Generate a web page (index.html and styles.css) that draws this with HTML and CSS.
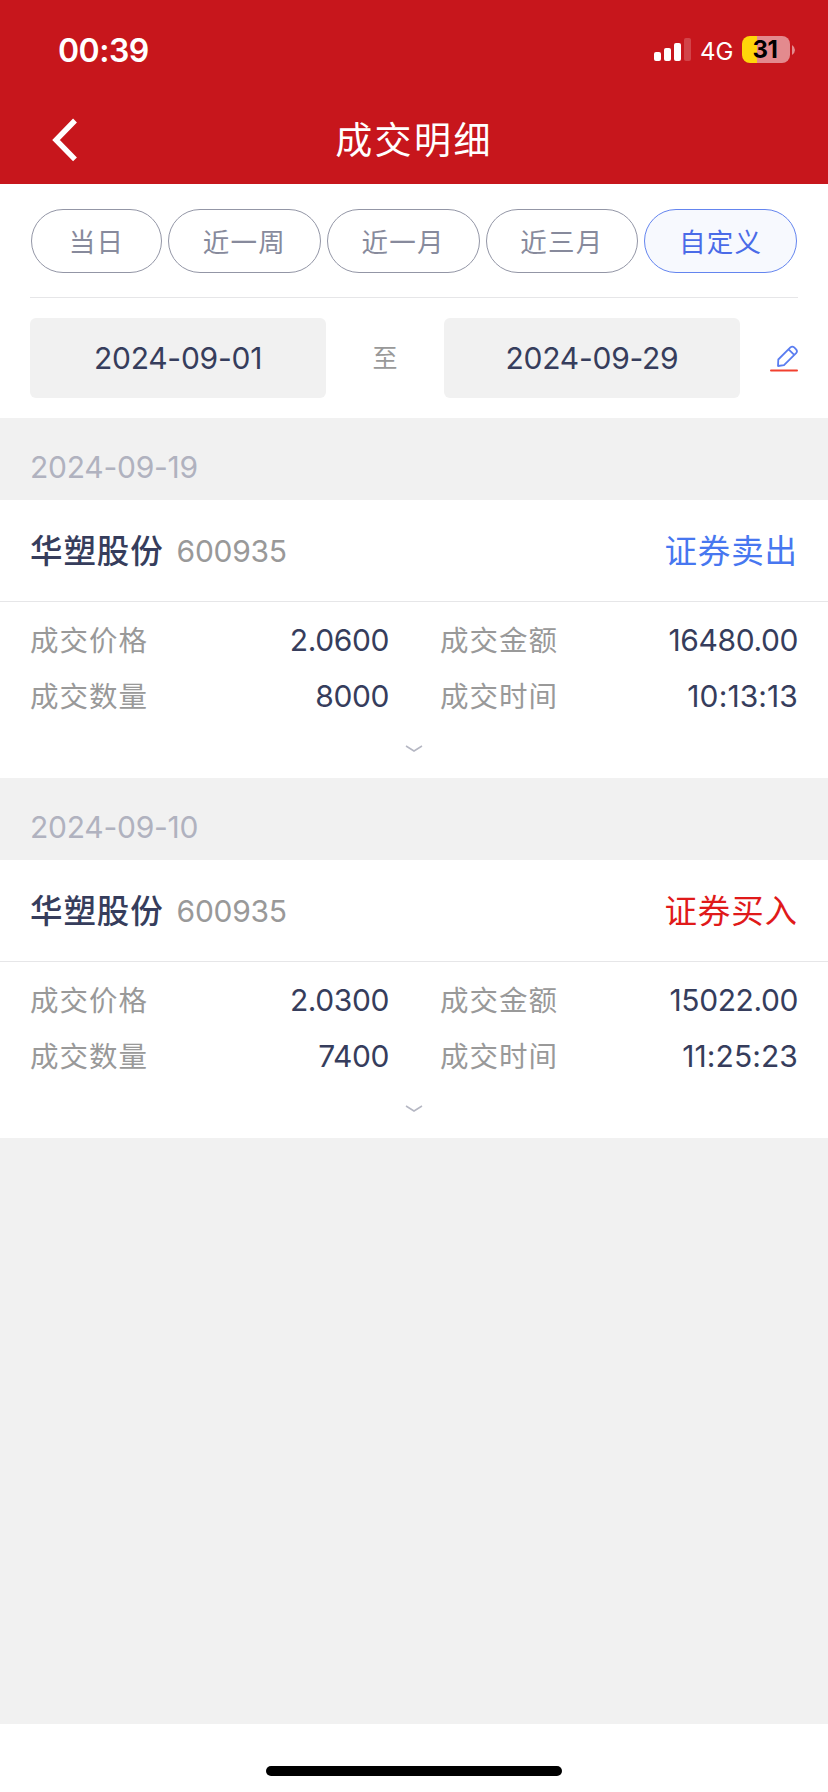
FILE: index.html
```html
<!DOCTYPE html>
<html lang="zh-CN">
<head>
  <meta charset="UTF-8">
  <meta name="viewport" content="width=device-width, initial-scale=1.0">
  <title>成交明细</title>
  <link rel="stylesheet" href="styles.css">
</head>
<body>
  <div class="app">
    <header>
      <div class="status">
        <span class="time">00:39</span>
        <svg class="signal" width="38" height="24" viewBox="0 0 38 24" fill="#fff">
          <rect x="0" y="14" width="7" height="9" rx="2"/>
          <rect x="10" y="10" width="7" height="13" rx="2"/>
          <rect x="20" y="5" width="7" height="18" rx="2"/>
          <rect x="30" y="0" width="7" height="23" rx="2" opacity=".2"/>
        </svg>
        <span class="net">4G</span>
        <span class="battery">31</span>
        <svg class="tip" width="3" height="10" viewBox="0 0 3 10"><path d="M0 0Q3 2 3 5Q3 8 0 10Z" fill="#fff" opacity=".5"/></svg>
      </div>
      <nav>
        <svg class="back" width="28" height="44" viewBox="0 0 28 44" fill="none" stroke="#fff" stroke-width="5.4"><path d="M25 2.5L6 22L25 41.3"/></svg>
        <h1>成交明细</h1>
      </nav>
    </header>

    <section class="filters">
      <div class="tabs">
        <button class="tab day">当日</button>
        <button class="tab">近一周</button>
        <button class="tab">近一月</button>
        <button class="tab">近三月</button>
        <button class="tab active">自定义</button>
      </div>
      <div class="range">
        <div class="date">2024-09-01</div>
        <span class="to">至</span>
        <div class="date">2024-09-29</div>
        <svg class="edit" width="28" height="28" viewBox="0 0 28 28" fill="none" stroke-linejoin="round" stroke-linecap="round">
          <path d="M8 21L8.3 14.5L20.4 2.4Q22.3 .8 24.2 2.4L26.1 4.3Q27.8 6.2 26.1 8.1L14 20.2Z M18.6 4.3L24.2 9.9" stroke="#5a7df0" stroke-width="1.8"/>
          <path d="M1 25.6H27" stroke="#f2402f" stroke-width="2"/>
        </svg>
      </div>
    </section>

    <main>
      <div class="day-title">2024-09-19</div>
      <article class="deal">
        <div class="deal-head">
          <span class="name">华塑股份</span><span class="code">600935</span>
          <span class="type sell">证券卖出</span>
        </div>
        <dl>
          <dt>成交价格</dt><dd>2.0600</dd>
          <dt>成交金额</dt><dd>16480.00</dd>
          <dt>成交数量</dt><dd>8000</dd>
          <dt>成交时间</dt><dd class="clock">10:13:13</dd>
        </dl>
        <svg class="more" width="18" height="8" viewBox="0 0 18 8"><path d="M1 1L9 6L17 1" fill="none" stroke="#b5b7c3" stroke-width="1.5"/></svg>
      </article>

      <div class="day-title">2024-09-10</div>
      <article class="deal">
        <div class="deal-head">
          <span class="name">华塑股份</span><span class="code">600935</span>
          <span class="type buy">证券买入</span>
        </div>
        <dl>
          <dt>成交价格</dt><dd>2.0300</dd>
          <dt>成交金额</dt><dd>15022.00</dd>
          <dt>成交数量</dt><dd>7400</dd>
          <dt>成交时间</dt><dd class="clock">11:25:23</dd>
        </dl>
        <svg class="more" width="18" height="8" viewBox="0 0 18 8"><path d="M1 1L9 6L17 1" fill="none" stroke="#b5b7c3" stroke-width="1.5"/></svg>
      </article>
    </main>

    <footer><div class="home-bar"></div></footer>
  </div>
</body>
</html>
```

FILE: styles.css
```css
* { box-sizing: border-box; }
body { margin: 0; font-family: Inter, "Noto Sans CJK SC", sans-serif; color: #363d5c; background: #f1f1f1; }
.app { width: 828px; height: 1792px; display: flex; flex-direction: column; overflow: hidden; }

header { height: 184px; background: #c7161c; color: #fff; }
.status { height: 96px; padding: 3px 33px 0 58px; display: flex; align-items: center; }
.time { font-size: 32px; font-weight: 600; letter-spacing: -.5px; margin-right: auto; padding-top: 1px; }
.signal { margin-right: 8px; }
.net { font-size: 24px; font-weight: 400; width: 34px; margin-right: 8px; padding-top: 3px; }
.battery { width: 48px; height: 27px; border-radius: 8px; background: linear-gradient(to right, #ffd60a 15px, #e38a8e 15px); color: #000; font-size: 24px; font-weight: 700; line-height: 28px; letter-spacing: -.5px; padding-right: 2px; text-align: center; }
.tip { margin-left: 2px; }
nav { height: 88px; padding: 0 50px; display: grid; grid-template-columns: 60px 1fr 60px; align-items: center; }
h1 { margin: 0; font-size: 37px; font-weight: 400; letter-spacing: 2.4px; text-align: center; line-height: 88px; padding-top: 1px; height: 88px; }

.filters { height: 234px; padding: 25px 30px 0; background: #fff; }
.tabs { height: 89px; padding: 0 1px; display: flex; gap: 6px; border-bottom: 1px solid #e6e6e8; }
.tab { flex: 1; height: 64px; padding: 0 0 2px; border: 1px solid #9396a6; border-radius: 32px; background: #fff; color: #878a9c; font: inherit; font-size: 26.5px; letter-spacing: 1.3px; }
.tab.day { flex: 0 0 131px; }
.tab.active { color: #4a6be8; border-color: #6485ef; background: #f7f9fe; }
.range { padding-top: 20px; display: flex; align-items: center; }
.date { width: 296px; height: 80px; border-radius: 6px; background: #f1f1f1; font-size: 30px; line-height: 80px; letter-spacing: -.25px; text-align: center; }
.to { width: 118px; padding-bottom: 4px; font-size: 25px; color: #999; text-align: center; }
.edit { margin: 2px 0 0 auto; }

main { flex: 1; }
.day-title { height: 82px; padding: 13px 30px 0; font-size: 30px; line-height: 72px; letter-spacing: -.25px; color: #b0b2bf; }
.deal { height: 278px; background: #fff; }
.deal-head { height: 102px; padding: 0 30px; display: flex; align-items: center; border-bottom: 1px solid #e6e6e8; }
.name { padding-bottom: 5px; font-size: 32.5px; font-weight: 500; letter-spacing: .9px; }
.code { margin-left: 13px; font-size: 30px; letter-spacing: -.3px; color: #999; }
.type { margin-left: auto; padding-bottom: 5px; font-size: 32.5px; letter-spacing: .9px; }
.sell { color: #4777f0; }
.buy { color: #e01a1a; }
dl { margin: 0; padding: 11px 30px 0; display: grid; grid-template-columns: 130px 229px 181px 1fr; grid-auto-rows: 56px; line-height: 56px; }
dt { font-size: 28.5px; letter-spacing: 1px; color: #999; white-space: nowrap; }
dt:nth-of-type(even) { padding-left: 51px; }
dd { margin: 0; font-size: 30px; line-height: 54px; letter-spacing: -.4px; text-align: right; }
.clock { letter-spacing: .1px; }
.more { display: block; margin: 20px auto 0; }

footer { height: 68px; padding-top: 42px; background: #fff; }
.home-bar { width: 296px; height: 10px; margin: 0 auto; border-radius: 5px; background: #000; }
```
